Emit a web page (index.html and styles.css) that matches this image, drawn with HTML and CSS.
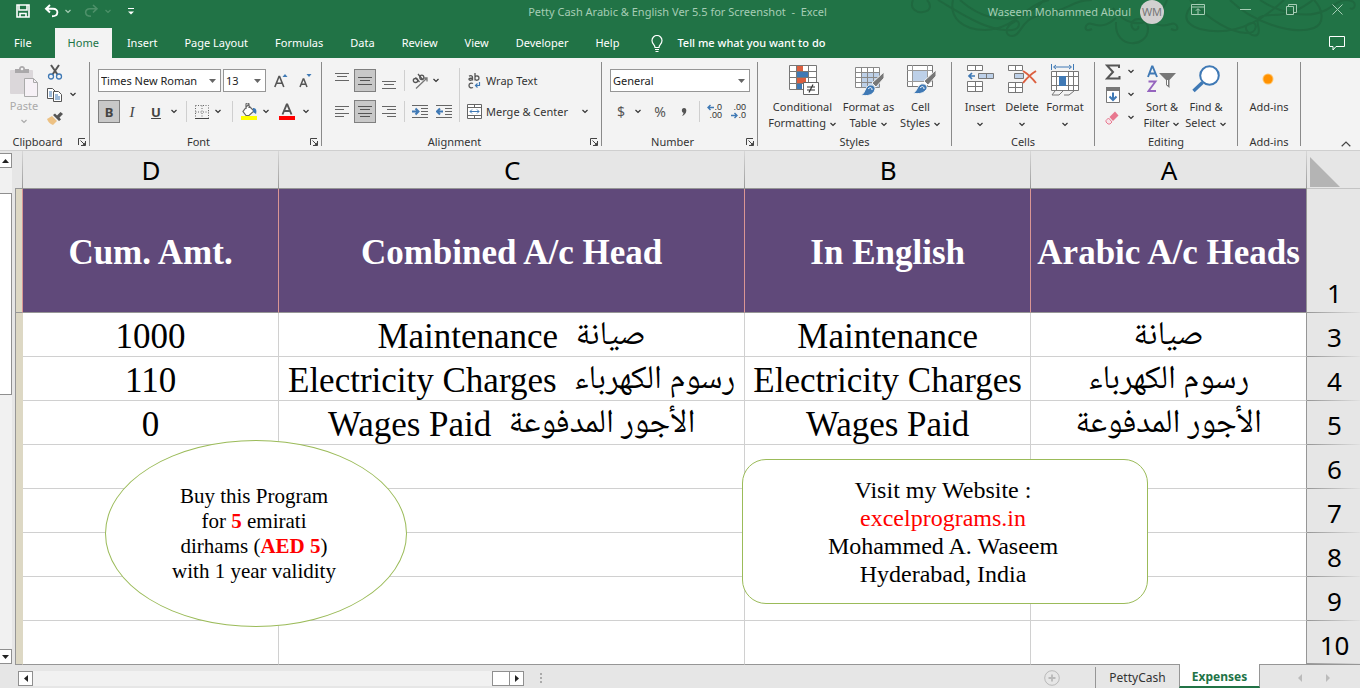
FILE: index.html
```html
<!DOCTYPE html>
<html lang="en">
<head>
<meta charset="utf-8">
<title>Petty Cash Arabic &amp; English Ver 5.5 for Screenshot - Excel</title>
<link rel="stylesheet" href="styles.css">
</head>
<body>
<svg class="defs" aria-hidden="true">
  <symbol id="chev" viewBox="0 0 8 5"><path d="M1.500 1l2.500 2.500L6.500 1" fill="none" stroke="currentColor" stroke-width="1.200"/></symbol>
  <symbol id="tri" viewBox="0 0 7 4"><path d="M0 0h7L3.500 4z" fill="currentColor"/></symbol>
  <symbol id="launch" viewBox="0 0 10 10"><path d="M1.500 8V1.500H8M3.500 3.500l4 4M8.500 4v4.500H4" fill="none" stroke="#444"/><path d="M8.500 5v3.500H5z" fill="#444"/></symbol>
</svg>
<div class="app">
  <header class="top">
    <svg class="swirls" viewBox="0 0 460 50" aria-hidden="true">
      <g fill="none" stroke="#1f683f" stroke-width="2">
        <path d="M13 0c-4 9 4 13 10 12 9-1 8-8 4-12M38 0c24 14 50 32 74 30 10-1 8-12 2-8-10 5-9 14-2 14 10 0 8-18 30-21 28-5 30-15 50-15"/>
        <path d="M53 0c-4 18 10 30 32 30 30 0 40-26 64-30M60 0c20 18 44 24 66 14 8-4 14-9 18-14"/>
        <path d="M192 29c-10 5-7-8 0-5 12 4 18-1 24-6M216 22c-2 28 32 26 32 7 0-14-20-12-16-2 2 5 8 2 6-1M271 29c10 5 7-8 0-5-12 4-18-1-24-6M213 8c16 24 44 18 54-8"/>
        <path d="M300 0c-14 8-22 22 0 29 40 10 70-16 84-29M290 0c20 20 40 32 56 33 12 1 12-12 5-10-12 3 0 15 6 12 8-6-12-20 16-20 20 0 30-8 40-15M330 0c20 20 60 36 84 28 12-5 8-20 0-28M360 0c18 12 46 20 66 10 8-4 12-10 20-10 14 0 8 12 4 8"/>
      </g>
    </svg>
    <div class="titlebar">
      <div class="quick">
        <button class="qb" aria-label="Save"><svg width="14" height="14" viewBox="0 0 14 14"><path d="M1 1h12v12H1zM3 1v5h8V1M4 13V9.500h6V13" fill="none" stroke="#fff" stroke-width="1.600"/></svg></button>
        <button class="qb" aria-label="Undo"><svg width="16" height="14" viewBox="0 0 16 14"><path d="M6 1L2 4.700l4 3.800M2 4.700h7c6 0 6 7.500-1 7.500" fill="none" stroke="#fff" stroke-width="1.900"/></svg></button>
        <svg class="chev pale" width="8" height="5"><use href="#chev"/></svg>
        <button class="qb redo" aria-label="Redo"><svg width="16" height="14" viewBox="0 0 16 14"><path d="M10 1l4 3.700-4 3.800M14 4.700H7c-6 0-6 7.500 1 7.500" fill="none" stroke="#4d9069" stroke-width="1.600"/></svg></button>
        <svg class="chev dim" width="8" height="5"><use href="#chev"/></svg>
        <button class="qb more" aria-label="Customize toolbar"><svg width="6" height="7" viewBox="0 0 6 7"><path d="M0 .5h6" stroke="#fff"/><path d="M0 3.500h6L3 6.500z" fill="#fff"/></svg></button>
      </div>
      <div class="doc-title">Petty Cash Arabic &amp; English Ver 5.5 for Screenshot &nbsp;- &nbsp;Excel</div>
      <div class="account">
        <span>Waseem Mohammed Abdul</span>
        <span class="avatar">WM</span>
        <button class="wb" aria-label="Ribbon display"><svg width="14" height="11" viewBox="0 0 14 11"><path d="M.5.5h13v10H.5zM.5 3h13M7 10V5M4.800 6.800L7 4.600l2.200 2.200" fill="none" stroke="#a6cdb5"/></svg></button>
        <button class="wb" aria-label="Minimize"><svg width="11" height="11" viewBox="0 0 11 11"><path d="M0 5.500h11" stroke="#a6cdb5"/></svg></button>
        <button class="wb" aria-label="Restore"><svg width="11" height="11" viewBox="0 0 11 11"><path d="M.5 2.500h7v8h-7zM2.500 2.500v-2h8v8h-3" fill="none" stroke="#a6cdb5"/></svg></button>
        <button class="wb" aria-label="Close"><svg width="11" height="11" viewBox="0 0 11 11"><path d="M.5.5l10 10M10.500.5l-10 10" stroke="#a6cdb5"/></svg></button>
      </div>
    </div>
    <nav class="tabs">
      <button class="tab file">File</button>
      <button class="tab active">Home</button>
      <button class="tab">Insert</button>
      <button class="tab">Page Layout</button>
      <button class="tab">Formulas</button>
      <button class="tab">Data</button>
      <button class="tab">Review</button>
      <button class="tab">View</button>
      <button class="tab">Developer</button>
      <button class="tab">Help</button>
      <button class="tab tell"><svg width="12" height="17" viewBox="0 0 12 17"><path d="M4 12.500c0-3-3-3.500-3-7a5 5 0 0 1 10 0c0 3.500-3 4-3 7zM4 14.500h4M4.500 16.500h3" fill="none" stroke="#fff" stroke-width="1.200"/></svg>Tell me what you want to do</button>
      <button class="comment" aria-label="Comments"><svg width="16" height="15" viewBox="0 0 16 15"><path d="M.5.5h15v10H7l-3 3.500v-3.500H.5z" fill="none" stroke="#fff"/></svg></button>
    </nav>
  </header>

  <section class="ribbon">
    <div class="group clipboard">
      <div class="body">
        <button class="paste"><svg width="28" height="32" viewBox="0 0 28 32"><rect x="0" y="4" width="23" height="24" rx="1" fill="#dbd7da"/><path d="M5 7V3h4c0-4 6-4 6 0h4v4z" fill="#aaa8aa"/><circle cx="12" cy="3" r="1.300" fill="#f3f3f3"/><path d="M14.500 12.500h9l4 4v14h-13z" fill="#f6f1f6" stroke="#aaa"/><path d="M23.500 12.500v4h4" fill="none" stroke="#aaa"/></svg>Paste<svg class="chev" width="8" height="5"><use href="#chev"/></svg></button>
        <div class="clip-side">
          <button aria-label="Cut"><svg width="16" height="16" viewBox="0 0 16 16"><path d="M4 1l6.500 9.500M12 1L5.500 10.500" stroke="#555" stroke-width="2" fill="none"/><circle cx="4" cy="12.500" r="2.500" fill="none" stroke="#3f79b5" stroke-width="1.300"/><circle cx="12" cy="12.500" r="2.500" fill="none" stroke="#3f79b5" stroke-width="1.300"/></svg></button>
          <button aria-label="Copy"><svg width="16" height="14" viewBox="0 0 16 14"><path d="M.5.5h5l3 3v7h-8z" fill="#fff" stroke="#555"/><path d="M2 4h3M2 6h3M2 8h3" stroke="#3f79b5"/><path d="M6.500 3.500h5l3 3v7h-8z" fill="#fff" stroke="#555"/><path d="M8 7h3M8 9h5M8 11h5" stroke="#3f79b5"/></svg><svg class="chev" width="8" height="5"><use href="#chev"/></svg></button>
          <button aria-label="Format painter"><svg width="16" height="14" viewBox="0 0 16 14"><path d="M0 8l5-3 5 5-4 4c-3-1-5-3-6-6z" fill="#edc183"/><path d="M6 4l2-1.500 2 2L13.500 1 16 3l-3.500 3.500 1.500 2L12 10z" fill="#555"/></svg></button>
        </div>
      </div>
      <div class="foot"><span>Clipboard</span><button aria-label="Clipboard settings"><svg width="10" height="10"><use href="#launch"/></svg></button></div>
    </div>

    <div class="group font">
      <div class="body rows">
        <div class="row">
          <label class="combo name"><select aria-label="Font"><option>Times New Roman</option></select><svg width="7" height="4"><use href="#tri"/></svg></label>
          <label class="combo size"><select aria-label="Font size"><option>13</option></select><svg width="7" height="4"><use href="#tri"/></svg></label>
          <button class="w24" aria-label="Grow font"><svg width="14" height="14" viewBox="0 0 14 14"><path d="M.8 13L5 2.500h.6L9.800 13M2.500 9.300h5.600" fill="none" stroke="#555" stroke-width="1.600"/><path d="M8.500 3L11 0l2.500 3z" fill="#3f79b5"/></svg></button>
          <button class="w24" aria-label="Shrink font"><svg width="14" height="14" viewBox="0 0 14 14"><path d="M2 13l3.200-8h.6L9 13M3.300 10.200h4.400" fill="none" stroke="#555" stroke-width="1.500"/><path d="M8.500 0h5L11 3z" fill="#3f79b5"/></svg></button>
        </div>
        <div class="row">
          <button class="on bold">B</button>
          <button class="w24 ital">I</button>
          <button class="w24 und">U</button>
          <svg class="chev" width="12" height="5"><use href="#chev"/></svg>
          <i class="sep"></i>
          <button class="w16" aria-label="Borders"><svg width="14" height="14" viewBox="0 0 14 14"><path d="M.5.5h13v13M.5.500v13M7 .5v13M.5 7h13" fill="none" stroke="#666" stroke-dasharray="1 1.500"/><path d="M0 13.500h14" stroke="#444"/></svg></button>
          <svg class="chev" width="16" height="5"><use href="#chev"/></svg>
          <i class="sep"></i>
          <button class="w18" aria-label="Fill color"><svg width="16" height="17" viewBox="0 0 16 17"><path d="M7 2l6 6-5 4.500H5L2 8.500zM5 6V1.500c0-2 3-2 3 0V5" fill="#fff" stroke="#666" stroke-width="1.200"/><path d="M12 5c3 0 4 2 3 6l-3-2z" fill="#3f79b5"/><path d="M0 13h16v4H0z" fill="#ff0"/></svg></button>
          <svg class="chev" width="16" height="5"><use href="#chev"/></svg>
          <button class="w26" aria-label="Font color"><svg width="16" height="17" viewBox="0 0 16 17"><path d="M3.500 11.500L7.700 1.500h.6l4.200 10M5.200 8h5.600" fill="none" stroke="#555" stroke-width="1.900"/><path d="M0 13h16v4H0z" fill="#f00"/></svg></button>
          <svg class="chev" width="12" height="5"><use href="#chev"/></svg>
        </div>
      </div>
      <div class="foot"><span>Font</span><button aria-label="Font settings"><svg width="10" height="10"><use href="#launch"/></svg></button></div>
    </div>

    <div class="group align">
      <div class="body">
        <div class="rows">
          <div class="row">
            <button class="w24" aria-label="Top align"><svg width="14" height="16" viewBox="0 0 14 16"><path d="M0 .5h14M2 3.500h10M0 7.500h14" stroke="#666"/></svg></button>
            <button class="on" aria-label="Middle align"><svg width="14" height="10" viewBox="0 0 14 10"><path d="M0 1.500h14M2 4.500h10M0 8.500h14" stroke="#555"/></svg></button>
            <button class="w26" aria-label="Bottom align"><svg width="14" height="16" viewBox="0 0 14 16"><path d="M0 8.500h14M2 11.500h10M0 15.500h14" stroke="#666"/></svg></button>
            <i class="sep tight"></i>
            <button class="w24" aria-label="Orientation"><svg width="17" height="16" viewBox="0 0 17 16"><g fill="none" stroke="#555" stroke-width="1.300"><ellipse cx="3.500" cy="7.500" rx="2.200" ry="2"/><path d="M3.500 4.500l4 4.500M6 1l5 6"/><ellipse cx="9.800" cy="4.300" rx="2" ry="2.200"/><path d="M4 15.500L15 5M11.500 5H15v3.500" stroke="#777"/></g></svg></button>
            <svg class="chev" width="8" height="5"><use href="#chev"/></svg>
          </div>
          <div class="row">
            <button class="w24" aria-label="Align left"><svg width="14" height="12" viewBox="0 0 14 12"><path d="M0 .5h14M0 3.500h9M0 7.500h14M0 10.500h9" stroke="#666"/></svg></button>
            <button class="on" aria-label="Center"><svg width="14" height="12" viewBox="0 0 14 12"><path d="M0 .5h14M2 3.500h10M0 7.500h14M2 10.500h10" stroke="#555"/></svg></button>
            <button class="w26" aria-label="Align right"><svg width="14" height="12" viewBox="0 0 14 12"><path d="M0 .5h14M5 3.500h9M0 7.500h14M5 10.500h9" stroke="#666"/></svg></button>
            <i class="sep tight"></i>
            <button class="w24" aria-label="Increase indent"><svg width="16" height="13" viewBox="0 0 16 13"><path d="M0 .5h16M9 3.500h7M9 6.500h7M9 9.500h7M0 12.500h16" stroke="#666"/><path d="M0 6.500h5M3.500 3.500l3 3-3 3" fill="none" stroke="#3f79b5" stroke-width="2"/></svg></button>
            <button class="w24" aria-label="Decrease indent"><svg width="16" height="13" viewBox="0 0 16 13"><path d="M0 .5h16M9 3.500h7M9 6.500h7M9 9.500h7M0 12.500h16" stroke="#666"/><path d="M7 6.500H2M4 3.500l-3 3 3 3" fill="none" stroke="#3f79b5" stroke-width="2"/></svg></button>
          </div>
        </div>
        <i class="sep tall"></i>
        <div class="rows wide">
          <button class="row text"><svg width="18" height="16" viewBox="0 0 18 16"><g fill="none" stroke="#555" stroke-width="1.300"><path d="M3 3.200c2-1 3.500-.5 3.500 1V7.500M6.500 5C4 5 3 5.300 3 6.300c0 1.200 2.500 1.400 3.500-.3M9 0v7.500M9 4c1-1.500 4-1.500 4 1s-3 3-4 1M7 10.500c-2-1-4 0-4 2s2 3 4 2"/></g><path d="M13.500 9v3.500H9.500M11.500 10.500l-2 2 2 2" fill="none" stroke="#3f79b5" stroke-width="1.200"/></svg>Wrap Text</button>
          <button class="row text"><svg width="18" height="15" viewBox="0 0 18 15"><path d="M1.500.5h14v14h-14zM1.500 3.500h14M1.500 11.500h14M8.500.5v3M8.500 11.500v3" fill="#fff" stroke="#666"/><path d="M4 7.500h9M6 5.500l-2 2 2 2M11 5.500l2 2-2 2" fill="none" stroke="#3f79b5"/></svg>Merge &amp; Center<svg class="chev end" width="8" height="5"><use href="#chev"/></svg></button>
        </div>
      </div>
      <div class="foot"><span>Alignment</span><button aria-label="Alignment settings"><svg width="10" height="10"><use href="#launch"/></svg></button></div>
    </div>

    <div class="group number">
      <div class="body rows">
        <div class="row"><label class="combo fmt"><select aria-label="Number format"><option>General</option></select><svg width="7" height="4"><use href="#tri"/></svg></label></div>
        <div class="row">
          <button class="w22 sym">$</button><svg class="chev" width="12" height="5"><use href="#chev"/></svg>
          <button class="w32 sym">%</button><button class="w16" aria-label="Comma style"><svg width="6" height="8" viewBox="0 0 6 8"><path d="M3 0c2 0 2.500 1.500 2.300 3C5 5.500 3.500 7 1 8c1-1.500 1.500-2.300 1.500-3.200C.5 4.800 0 .2 3 0z" fill="#555"/></svg></button>
          <i class="sep"></i>
          <button class="w24 dec" aria-label="Increase decimal"><span><svg width="7" height="7" viewBox="0 0 7 7"><path d="M7 3.500H1M3.500 1L1 3.500 3.500 6" fill="none" stroke="#3f79b5" stroke-width="1.400"/></svg>.0</span><span>.00</span></button>
          <button class="w24 dec" aria-label="Decrease decimal"><span>.00</span><span><svg width="7" height="7" viewBox="0 0 7 7"><path d="M0 3.500h6M3.500 1L6 3.500 3.500 6" fill="none" stroke="#3f79b5" stroke-width="1.400"/></svg>.0</span></button>
        </div>
      </div>
      <div class="foot"><span>Number</span><button aria-label="Number settings"><svg width="10" height="10"><use href="#launch"/></svg></button></div>
    </div>

    <div class="group styles">
      <div class="body bigs">
        <button class="big w70"><svg width="32" height="32" viewBox="0 0 32 32"><path d="M2.500 1.500h27v24h-27z" fill="#fff"/><path d="M10 1h6v6h-6zM10 13h9v6h-9z" fill="#dc5f3f"/><path d="M10 7h11v6H10zM10 19h5v6h-5z" fill="#3f79b5"/><path d="M2.500 1.500h27v24h-27zM9.500 1v24M21.500 1v24M2 7.500h28M2 13.500h28M2 19.500h28" fill="none" stroke="#777"/><path d="M16.500 18.500h15v12h-15z" fill="#fff" stroke="#666"/><path d="M20 23h8M20 26h8M26 20.500l-4 8" stroke="#333" stroke-width="1.200"/></svg><span>Conditional<br>Formatting <svg class="chev" width="8" height="5"><use href="#chev"/></svg></span></button>
        <button class="big w62"><svg width="32" height="32" viewBox="0 0 32 32"><path d="M2.500 3.500h24v20h-24z" fill="#fff"/><path d="M9 9h17v14H9z" fill="#bdd0e8"/><path d="M2.500 3.500h24v20h-24zM8.500 3v20M14.500 3v20M20.500 3v20M2 8.500h24M2 13.500h24M2 18.500h24" fill="none" stroke="#888"/><path d="M31 8v6l-8 9-4-4z" fill="#777" stroke="#f3f3f3"/><path d="M8 31c4-1 4-8 8-10 6-1 8 4 4 8-3 3-8 3-12 2z" fill="#3f79b5" stroke="#f3f3f3"/><path d="M15 25c2-2 4-2 4 1" stroke="#fff" fill="none"/></svg><span>Format as<br>Table <svg class="chev" width="8" height="5"><use href="#chev"/></svg></span></button>
        <button class="big w42"><svg width="30" height="32" viewBox="0 0 30 32"><path d="M1.500 1.500h25v21h-25z" fill="#fff" stroke="#777"/><path d="M6.500 1v21M1 6.500h25M1 17.500h25M21.500 1v21" stroke="#999"/><path d="M7 7h14v10H7z" fill="#bdd0e8"/><path d="M30 6v6l-8 9-4-4z" fill="#777" stroke="#f3f3f3"/><path d="M7 29c4-1 4-7 8-9 6-1 8 4 4 7-3 3-8 3-12 2z" fill="#3f79b5" stroke="#f3f3f3"/><path d="M14 24c2-2 4-2 4 1" stroke="#fff" fill="none"/></svg><span>Cell<br>Styles <svg class="chev" width="8" height="5"><use href="#chev"/></svg></span></button>
      </div>
      <div class="foot full"><span>Styles</span></div>
    </div>

    <div class="group cells">
      <div class="body bigs">
        <button class="big w42"><svg width="27" height="32" viewBox="0 0 27 32"><path d="M.5 1.500h15v5H.5zM8.500 1.500v5M.5 17.500h15v10H.5zM8.500 17.500v10M.5 22.500h15" fill="#fff" stroke="#777"/><path d="M11.500 9.500h15v5h-15zM19.500 9.500v5" fill="#bdd0e8" stroke="#777"/><path d="M8 12H2M5 9l-3 3 3 3" fill="none" stroke="#3f79b5" stroke-width="1.700"/></svg><span>Insert<br><svg class="chev" width="8" height="5"><use href="#chev"/></svg></span></button>
        <button class="big w42"><svg width="30" height="32" viewBox="0 0 30 32"><path d="M1.500 1.500h14v5h-14zM8.500 1.500v5M1.500 18.500h14v10h-14zM8.500 18.500v10M1.500 23.500h14" fill="#fff" stroke="#777"/><path d="M7.500 9.500h9v5h-9z" fill="#bdd0e8" stroke="#777"/><path d="M16 7c5 3 9 7 13 12M29 7c-5 3-9 7-13 12" fill="none" stroke="#dc5f3f" stroke-width="2"/></svg><span>Delete<br><svg class="chev" width="8" height="5"><use href="#chev"/></svg></span></button>
        <button class="big w44"><svg width="30" height="32" viewBox="0 0 30 32"><path d="M1.500 7.500h27v19h-27z" fill="#fff"/><path d="M1.500 7.500h27v19h-27zM6.500 7v19M18.500 7v19M23.500 7v19M1 12.500h27M1 21.500h27M5 27l-3 4h7l4-4M14 31h5l5-4" fill="none" stroke="#777"/><path d="M9 12h7v10H9z" fill="#3f79b5"/><path d="M1.500 0v6M23.500 0v6M4 3h17M6 1L3.500 3 6 5M19 1l2.500 2L19 5" fill="none" stroke="#3f79b5"/></svg><span>Format<br><svg class="chev" width="8" height="5"><use href="#chev"/></svg></span></button>
      </div>
      <div class="foot full"><span>Cells</span></div>
    </div>

    <div class="group editing">
      <div class="body bigs">
        <div class="edit-side">
          <button aria-label="AutoSum"><svg width="16" height="16" viewBox="0 0 16 16"><path d="M14 4V1.500H2l6 6.500-6 6.500h12.500V12" fill="none" stroke="#555" stroke-width="2"/></svg><svg class="chev" width="8" height="5"><use href="#chev"/></svg></button>
          <button aria-label="Fill"><svg width="16" height="16" viewBox="0 0 16 16"><path d="M1.500.5h13v15h-13z" fill="#fff" stroke="#777"/><path d="M1 0h14v4H1z" fill="#777"/><path d="M8 5.500V13M4.500 9.500L8 13l3.500-3.500" fill="none" stroke="#3f79b5" stroke-width="2"/></svg><svg class="chev" width="8" height="5"><use href="#chev"/></svg></button>
          <button aria-label="Clear"><svg width="14" height="14" viewBox="0 0 14 14"><path d="M4.500 6L10 .5l3.500 4L8 10z" fill="#e8788f"/><path d="M3.500 7L7 11l-2 2H3L1 11V9.500z" fill="#f6e3e8" stroke="#e8788f"/></svg><svg class="chev" width="8" height="5"><use href="#chev"/></svg></button>
        </div>
        <button class="big w44"><svg width="30" height="32" viewBox="0 0 30 32"><path d="M1 13L5 2.500h.6L10 13M2.500 9.500h6" fill="none" stroke="#3f79b5" stroke-width="1.900"/><path d="M1.500 17.500h7L1.500 27H9" fill="none" stroke="#9564be" stroke-width="1.900"/><path d="M12 9h17l-6.500 7v8l-3.500-3v-5z" fill="#777"/><path d="M20.500 16v5" stroke="#fff"/></svg><span>Sort &amp;<br>Filter <svg class="chev" width="8" height="5"><use href="#chev"/></svg></span></button>
        <button class="big w44"><svg width="28" height="32" viewBox="0 0 28 32"><path d="M1.500 27l9-8.500" stroke="#3f79b5" stroke-width="3.500"/><circle cx="17.500" cy="11.500" r="9.300" fill="#fff" stroke="#3f79b5" stroke-width="2"/></svg><span>Find &amp;<br>Select <svg class="chev" width="8" height="5"><use href="#chev"/></svg></span></button>
      </div>
      <div class="foot full"><span>Editing</span></div>
    </div>

    <div class="group addins">
      <div class="body bigs">
        <button class="big w62"><svg width="32" height="32" viewBox="0 0 32 32"><circle cx="15" cy="15" r="5.500" fill="#ffc46b"/><circle cx="15" cy="15" r="4.500" fill="#ff9100"/></svg><span>Add-ins</span></button>
      </div>
      <div class="foot full"><span>Add-ins</span></div>
    </div>
    <button class="collapse" aria-label="Collapse ribbon"><svg width="10" height="6" viewBox="0 0 10 6"><path d="M.7 5.200L5 1l4.300 4.200" fill="none" stroke="#444" stroke-width="1.200"/></svg></button>
  </section>

  <main class="sheet">
    <div class="vscroll">
      <button aria-label="Scroll up"><svg width="7" height="4" viewBox="0 0 7 4"><path d="M0 4h7L3.500 0z" fill="#222"/></svg></button>
      <div class="vthumb"></div>
      <button aria-label="Scroll down"><svg width="7" height="4" viewBox="0 0 7 4"><path d="M0 0h7L3.500 4z" fill="#222"/></svg></button>
    </div>
    <table class="grid">
      <colgroup><col class="c-edge"><col class="c-d"><col class="c-c"><col class="c-b"><col><col class="c-num"></colgroup>
      <thead><tr><th class="edge-top"></th><th scope="col">D</th><th scope="col">C</th><th scope="col">B</th><th scope="col">A</th><th class="corner"><svg width="30" height="30" viewBox="0 0 30 30"><path d="M0 0v30h30z" fill="#b4b4b4"/></svg></th></tr></thead>
      <tbody>
        <tr class="head"><td class="edge"></td><td>Cum. Amt.</td><td>Combined A/c Head</td><td>In English</td><td class="last">Arabic A/c Heads</td><th scope="row">1</th></tr>
        <tr><td class="edge"></td><td>1000</td><td>Maintenance&nbsp; <bdi class="ar" lang="ar">صيانة</bdi></td><td>Maintenance</td><td class="last"><bdi class="ar" lang="ar">صيانة</bdi></td><th scope="row">3</th></tr>
        <tr><td class="edge"></td><td>110</td><td>Electricity Charges&nbsp; <bdi class="ar" lang="ar">رسوم الكهرباء</bdi></td><td>Electricity Charges</td><td class="last"><bdi class="ar" lang="ar">رسوم الكهرباء</bdi></td><th scope="row">4</th></tr>
        <tr><td class="edge"></td><td>0</td><td>Wages Paid&nbsp; <bdi class="ar" lang="ar">الأجور المدفوعة</bdi></td><td>Wages Paid</td><td class="last"><bdi class="ar" lang="ar">الأجور المدفوعة</bdi></td><th scope="row">5</th></tr>
        <tr><td class="edge"></td><td></td><td></td><td></td><td class="last"></td><th scope="row">6</th></tr>
        <tr><td class="edge"></td><td></td><td></td><td></td><td class="last"></td><th scope="row">7</th></tr>
        <tr><td class="edge"></td><td></td><td></td><td></td><td class="last"></td><th scope="row">8</th></tr>
        <tr><td class="edge"></td><td></td><td></td><td></td><td class="last"></td><th scope="row">9</th></tr>
        <tr class="bottom"><td class="edge"></td><td></td><td></td><td></td><td class="last"></td><th scope="row">10</th></tr>
      </tbody>
    </table>
    <div class="shape oval"><p>Buy this Program<br>for <b>5</b> emirati<br>dirhams (<b>AED 5</b>)<br>with 1 year validity</p></div>
    <div class="shape card"><p>Visit my Website :<br><a href="#">excelprograms.in</a><br>Mohammed A. Waseem<br>Hyderabad, India</p></div>
  </main>

  <footer class="bar">
    <div class="hscroll">
      <button aria-label="Scroll left"><svg width="4" height="7" viewBox="0 0 4 7"><path d="M4 0v7L0 3.500z" fill="#222"/></svg></button>
      <div class="htrack"><div class="hthumb"></div></div>
      <button aria-label="Scroll right"><svg width="4" height="7" viewBox="0 0 4 7"><path d="M0 0v7l4-3.500z" fill="#222"/></svg></button>
    </div>
    <svg class="dots" width="2" height="11" viewBox="0 0 2 11"><path d="M0 0h2v2H0zM0 4h2v2H0zM0 8h2v2H0z" fill="#aaa"/></svg>
    <button class="plus" aria-label="New sheet"><svg width="16" height="16" viewBox="0 0 16 16"><circle cx="8" cy="8" r="7.300" fill="none" stroke="#b9b9b9"/><path d="M8 4.500v7M4.500 8h7" stroke="#b9b9b9" stroke-width="1.800"/></svg></button>
    <button class="stab">PettyCash</button>
    <button class="stab current">Expenses</button>
    <div class="navs">
      <button aria-label="Previous sheet"><svg width="4" height="8" viewBox="0 0 4 8"><path d="M4 0v8L0 4z" fill="#bbb"/></svg></button>
      <button aria-label="Next sheet"><svg width="4" height="8" viewBox="0 0 4 8"><path d="M0 0v8l4-4z" fill="#bbb"/></svg></button>
    </div>
  </footer>
</div>
</body>
</html>
```
FILE: styles.css
```css
* { box-sizing: border-box; }
body { margin: 0; font: 11px/16px "Noto Sans", "Open Sans", sans-serif; color: #333; background: #e6e6e6; }
button { margin: 0; padding: 0; border: 0; background: none; color: inherit; font: inherit; display: flex; align-items: center; justify-content: center; flex: none; }
svg { flex: none; display: block; }
.defs { position: absolute; width: 0; height: 0; }
.app { display: flex; flex-direction: column; min-height: 100vh; }
.chev { color: #333; }

/* title bar and tabs */
.top { position: relative; background: #217346; color: #fff; }
.swirls { position: absolute; top: 0; right: 0; width: 460px; height: 50px; }
.titlebar { position: relative; display: grid; grid-template-columns: 1fr auto 1fr; height: 28px; color: #a6cdb5; }
.quick { display: flex; align-items: center; height: 22px; padding-left: 16px; }
.qb { margin-right: 4px; }
.qb:first-child { margin-right: 14px; }
.quick .redo { margin: 0 5px 0 11px; }
.quick .more { margin: 0 0 0 16px; }
.pale { color: #a6cdb5; }
.dim { color: #4d9069; }
.doc-title { line-height: 24px; padding-right: 5px; }
.account { display: flex; justify-content: flex-end; align-items: center; height: 24px; }
.avatar { width: 24px; height: 24px; margin-left: 9px; border-radius: 50%; background: #d2d0d0; color: #777; text-align: center; line-height: 23px; }
.wb { width: 46px; height: 19px; align-self: flex-start; }
.wb:first-of-type { width: 58px; padding-left: 10px; }
.tabs { position: relative; display: flex; align-items: stretch; height: 30px; padding-left: 1px; }
.tab { padding: 0 13px; margin-right: 1px; }
.file { margin-right: 10px; }
.active { background: #f3f3f3; color: #217346; margin-right: 2px; }
.tell { gap: 14px; font-weight: 500; padding-left: 18px; }
.comment { margin-left: auto; padding-right: 15px; }

/* ribbon */
.ribbon { display: flex; background: #f3f3f3; border-bottom: 1px solid #cfcfcf; height: 93px; padding-top: 4px; }
.group { display: flex; flex-direction: column; flex: none; height: 84px; border-right: 1px solid #8a8a8a; }
.body { flex: 1; display: flex; }
.foot { display: flex; height: 16px; margin-bottom: -4px; align-items: center; }
.foot span { flex: 1; text-align: center; line-height: 16px; }
.foot button { width: 14px; }
.clipboard { width: 90px; }
.font { width: 232px; }
.align { width: 280px; }
.number { width: 156px; }
.styles { width: 194px; }
.cells { width: 143px; }
.editing { width: 143px; }
.addins { width: 63px; }
.paste { width: 46px; flex-direction: column; justify-content: flex-start; color: #aaa; padding: 4px 0 0 2px; }
.paste .chev { color: #aaa; margin-top: 5px; }
.clip-side { display: flex; flex-direction: column; margin-top: -2px; }
.clip-side button { height: 23px; justify-content: flex-start; gap: 6px; padding-left: 1px; }
.rows { display: flex; flex-direction: column; gap: 8px; padding: 7px 0 0 8px; }
.row { display: flex; align-items: center; height: 23px; }
.combo { display: flex; align-items: center; height: 23px; border: 1px solid #969696; background: #fff; padding-right: 4px; }
.combo select { flex: 1; min-width: 0; border: 0; background: none; appearance: none; font: inherit; color: #222; padding: 0 2px; outline: 0; }
.combo svg { color: #666; }
.name { width: 123px; margin-right: 2px; }
.size { width: 43px; margin-right: 3px; }
.fmt { width: 140px; }
.on { width: 22px; height: 23px; background: #c8c8c8; border: 1px solid #7f7f7f; }
.w16 { width: 16px; } .w18 { width: 18px; } .w22 { width: 22px; } .w24 { width: 24px; } .w26 { width: 26px; } .w32 { width: 32px; }
.w42 { width: 42px; } .w44 { width: 44px; } .w62 { width: 62px; } .w70 { width: 70px; }
.bold, .ital, .und { font-size: 13px; font-weight: 700; color: #444; }
.ital { font-family: "Liberation Serif", serif; font-style: italic; font-size: 15px; font-weight: 400; }
.und { text-decoration: underline; }
.sep { width: 1px; height: 21px; background: #cfcfcf; margin: 0 7px 0 6px; flex: none; }
.tight { margin: 0 3px 0 2px; }
.tall { height: 54px; margin: 6px 6px 0 3px; }
.align .rows { width: 134px; }
.align .wide { flex: 1; width: auto; padding-left: 0; }
.text { justify-content: flex-start; gap: 2px; }
.text .end { margin-left: auto; margin-right: 12px; }
.sym { font-size: 14px; color: #555; }
.number .sep { margin: 0 2px 0 7px; }
.dec { flex-direction: column; font: 9px/9px "Liberation Sans", sans-serif; align-items: flex-end; padding-right: 4px; }
.dec span { display: flex; align-items: center; height: 8px; }
.bigs { justify-content: center; }
.big { flex-direction: column; justify-content: flex-start; padding-top: 2px; gap: 3px; white-space: nowrap; }
.big span .chev { display: inline-block; vertical-align: middle; }
.edit-side { display: flex; flex-direction: column; width: 36px; margin-top: -2px; }
.edit-side button { height: 23px; justify-content: space-between; padding: 0 5px 0 1px; }
.collapse { margin-left: auto; align-self: flex-end; padding: 0 9px 3px 0; }

/* worksheet */
.sheet { position: relative; display: flex; gap: 3px; }
.vscroll { width: 12px; flex: none; display: flex; flex-direction: column; background: #f1f1f1; margin: 2px 0 1px; }
.vscroll button, .vthumb { height: 15px; border: 1px solid #8f8f8f; border-left: 0; background: #fff; }
.vthumb { flex: 0 0 202px; margin: 25px 0 auto; }
.grid { flex: 1; width: 100%; min-width: 0; table-layout: fixed; border-collapse: separate; border-spacing: 0; font: 35px/38px "Liberation Serif", "Times New Roman", serif; color: #000; text-align: center; white-space: nowrap; }
.c-edge { width: 8px; }
.c-d { width: 19.04%; }
.c-c { width: 34.65%; }
.c-b { width: 21.27%; }
.c-num { width: 53px; }
.grid th, .grid td { padding: 0; }
.grid td { height: 44px; padding-top: 4px; background: #fff; border-right: 1px solid #d0d0d0; border-bottom: 1px solid #d0d0d0; }
.grid th { font: 26px/36px "Noto Sans", "Open Sans", sans-serif; background: #e6e6e6; }
.grid thead th { height: 38px; padding-top: 1px; border-bottom: 1px solid #969696; background: linear-gradient(#d8d8d8, #999) right / 1px 100% no-repeat #e6e6e6; }
.grid tbody th { vertical-align: bottom; background: linear-gradient(90deg, #969696, #e0e0e0) bottom / 100% 1px no-repeat #e6e6e6; padding: 0 0 2px 2px; }
.grid thead .corner { background: #e6e6e6; padding: 4px 0 0 3px; border-color: #c4c4c4; }
.grid td.last { border-right-color: #969696; }
.grid td.edge { background: #ddd8c4; border-left: 1px solid #969696; border-bottom: 0; border-right: 1px solid #ddd8c4; }
.grid .head td { height: 124px; background: #60497a; color: #fff; font-weight: 700; border-right-color: #da9694; border-bottom: 1px solid #969696; }
.grid .head td.edge { background: #ddd8c4; }
.grid .head td.last { border-right-color: #969696; }
.grid .bottom td, .grid .bottom th { border-bottom: 1px solid #969696; }
.grid .bottom th { padding-bottom: 1px; }
.ar { font-family: "Noto Naskh Arabic", "Noto Sans Arabic", "DejaVu Sans", sans-serif; font-size: 33px; line-height: 0; vertical-align: 4px; }
.shape { position: absolute; display: flex; align-items: center; justify-content: center; background: #fff; border: 1px solid #9bbb59; font-family: "Liberation Serif", serif; color: #000; text-align: center; padding-right: 4px; }
.shape p { margin: 0; }
.shape b, .shape a { color: #f00; text-decoration: none; }
.oval { left: 105px; top: 289px; width: 302px; height: 187px; border-radius: 50%; font-size: 21px; line-height: 25px; }
.card { left: 742px; top: 308px; width: 406px; height: 145px; border-radius: 24px; font-size: 24px; line-height: 28px; }

/* sheet bar */
.bar { display: flex; align-items: stretch; height: 23px; padding-left: 18px; background: #e6e6e6; }
.hscroll { display: flex; width: 506px; margin: 6px 16px 2px 0; background: #f1f1f1; }
.hscroll button { width: 15px; border: 1px solid #8f8f8f; background: #fff; }
.htrack { flex: 1; display: flex; justify-content: flex-end; }
.hthumb { width: 17px; border: 1px solid #8f8f8f; border-right: 0; background: #fff; }
.dots { align-self: center; margin-top: 3px; }
.plus { margin-left: auto; padding: 2px 35px 0 0; }
.stab { width: 84px; font-size: 12px; border-left: 1px solid #969696; margin-top: 2px; }
.current { width: 81px; margin-top: -1px; padding-top: 4px; background: #fff; color: #217346; font-weight: 700; border-right: 1px solid #969696; border-bottom: 2px solid #217346; position: relative; }
.navs { display: flex; gap: 24px; padding: 3px 30px 0 38px; }
```
